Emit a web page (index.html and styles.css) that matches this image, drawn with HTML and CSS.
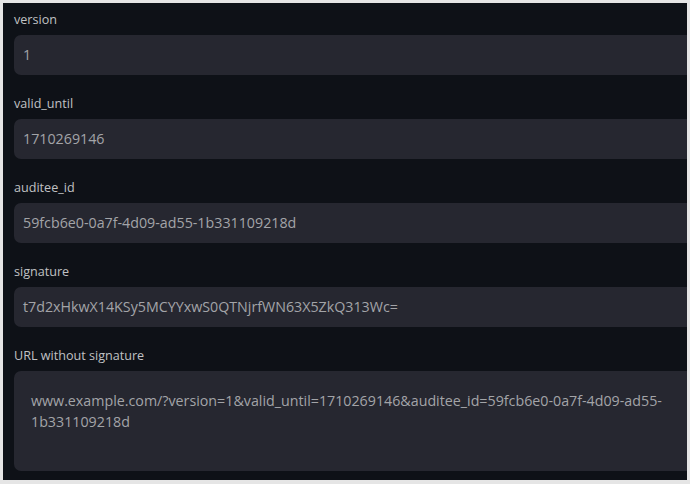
FILE: index.html
```html
<!DOCTYPE html>
<html>
<head>
<meta charset="utf-8">
<link rel="stylesheet" href="styles.css">
</head>
<body>
<div class="frame">
  <div class="panel">
    <div class="field">
      <div class="label">version</div>
      <div class="input">1</div>
    </div>
    <div class="field">
      <div class="label">valid_until</div>
      <div class="input">1710269146</div>
    </div>
    <div class="field">
      <div class="label">auditee_id</div>
      <div class="input">59fcb6e0-0a7f-4d09-ad55-1b331109218d</div>
    </div>
    <div class="field">
      <div class="label">signature</div>
      <div class="input">t7d2xHkwX14KSy5MCYYxwS0QTNjrfWN63X5ZkQ313Wc=</div>
    </div>
    <div class="field last">
      <div class="label">URL without signature</div>
      <div class="textarea">www.example.com/?version=1&amp;valid_until=1710269146&amp;auditee_id=59fcb6e0-0a7f-4d09-ad55-1b331109218d</div>
    </div>
  </div>
</div>
</body>
</html>
```

FILE: styles.css
```css
html, body {
  margin: 0;
  padding: 0;
  background: #e5e5e5;
}
.frame {
  width: 690px;
  height: 484px;
  box-sizing: border-box;
  padding: 3px 3px 4px 3px;
}
.panel {
  height: 100%;
  background: #0e1117;
  overflow: hidden;
  box-sizing: border-box;
  padding: 6px 0 0 11px;
  font-family: "Open Sans", "Liberation Sans", sans-serif;
}
.field {
  margin-bottom: 18px;
}
.label {
  line-height: 20px;
  font-size: 12.6px;
  color: #c0c1c4;
  padding-top: 1px;
  padding-bottom: 5px;
  white-space: nowrap;
}
.input {
  width: 720px;
  height: 40px;
  line-height: 40px;
  box-sizing: border-box;
  padding-left: 9px;
  background: #262730;
  border-radius: 7px;
  color: #a3a4a8;
  font-size: 14.25px;
  white-space: nowrap;
}
.textarea {
  width: 720px;
  height: 100px;
  box-sizing: border-box;
  padding: 19px 23px 0 17px;
  background: #262730;
  border-radius: 7px;
  color: #a3a4a8;
  font-size: 14.25px;
  line-height: 21px;
}
```
